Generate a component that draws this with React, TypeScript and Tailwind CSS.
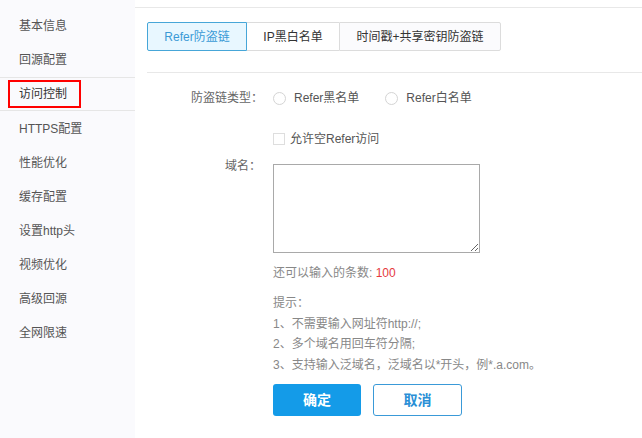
import React from "react";

const font = { fontFamily: '"Liberation Sans","Noto Sans CJK SC",sans-serif' };

function SideItem({ label }: { label: string }) {
  return (
    <div className="h-[34px] flex items-center pl-[19px] text-[12px] text-[#555]">{label}</div>
  );
}

function Radio({ label }: { label: string }) {
  return (
    <div className="flex items-center">
      <span className="w-[13px] h-[13px] rounded-full border border-[#d4d4d4] bg-white" />
      <span className="ml-[8px] text-[#555]">{label}</span>
    </div>
  );
}

export default function App() {
  return (
    <div className="flex w-[642px] h-[438px] bg-white overflow-hidden text-[12px]" style={font}>
      <div className="w-[135px] h-full bg-[#fafafd] pt-[9px] flex flex-col">
        <SideItem label="基本信息" />
        <SideItem label="回源配置" />
        <div className="border-t border-b border-[#e6e6e6] h-[34px] flex items-center pl-[8px]">
          <span className="h-[28px] w-[73px] border-2 border-[#ff0000] flex items-center pl-[9px] text-[12px] text-[#333]">
            访问控制
          </span>
        </div>
        <div className="h-[1px]" />
        <SideItem label="HTTPS配置" />
        <SideItem label="性能优化" />
        <SideItem label="缓存配置" />
        <SideItem label="设置http头" />
        <SideItem label="视频优化" />
        <SideItem label="高级回源" />
        <SideItem label="全网限速" />
      </div>
      <div className="flex-1 pt-[7px]">
        <div className="border-t border-[#e8e8e8] pl-[12px] pt-[14px]">
          <div className="pb-[21px] border-b border-[#e8e8e8]">
            <div className="flex h-[29px]">
              <div className="w-[100px] flex items-center justify-center border border-[#46a6d8] bg-[#e8f7ff] text-[#3a9ad6] rounded-l-[2px]">
                Refer防盗链
              </div>
              <div className="w-[92px] flex items-center justify-center border-y border-[#dcdcdc] bg-white text-[#333]">
                IP黑白名单
              </div>
              <div className="w-[162px] flex items-center justify-center border border-[#dcdcdc] bg-[#fbfbfd] text-[#333] rounded-r-[2px]">
                时间戳+共享密钥防盗链
              </div>
            </div>
          </div>
          <div className="flex flex-col">
            <div className="flex mt-[15px] leading-[20px]">
              <div className="w-[116px] text-right text-[#666]">防盗链类型：</div>
              <div className="ml-[10px] flex items-center gap-[26px]">
                <Radio label="Refer黑名单" />
                <Radio label="Refer白名单" />
              </div>
            </div>
            <div className="flex mt-[21px] leading-[20px]">
              <div className="w-[116px]" />
              <div className="ml-[10px] flex items-center">
                <span className="w-[12px] h-[12px] border border-[#dedede] bg-white" />
                <span className="ml-[5px] text-[#555]">允许空Refer访问</span>
              </div>
            </div>
            <div className="flex mt-[7px] leading-[20px]">
              <div className="w-[116px] text-right text-[#666] pr-[2px]">域名：</div>
              <div className="ml-[10px] flex flex-col">
                <textarea className="mt-[8px] w-[207px] h-[89px] border border-[#a9a9a9] bg-white block" />
                <div className="mt-[10px] text-[#888]">
                  还可以输入的条数: <span className="text-[#e5393d]">100</span>
                </div>
                <div className="mt-[10px] text-[#888] leading-[20.5px]">
                  <div>提示：</div>
                  <div>1、不需要输入网址符http://;</div>
                  <div>2、多个域名用回车符分隔;</div>
                  <div>3、支持输入泛域名，泛域名以*开头，例*.a.com。</div>
                </div>
                <div className="mt-[9px] flex gap-[12px]">
                  <button className="w-[88px] h-[32px] rounded-[3px] bg-[#149be8] text-white text-[14px] font-bold">
                    确定
                  </button>
                  <button className="w-[89px] h-[32px] rounded-[3px] border border-[#3a9ad8] bg-white text-[#2a8fd6] text-[14px] font-bold">
                    取消
                  </button>
                </div>
              </div>
            </div>
          </div>
        </div>
      </div>
    </div>
  );
}
